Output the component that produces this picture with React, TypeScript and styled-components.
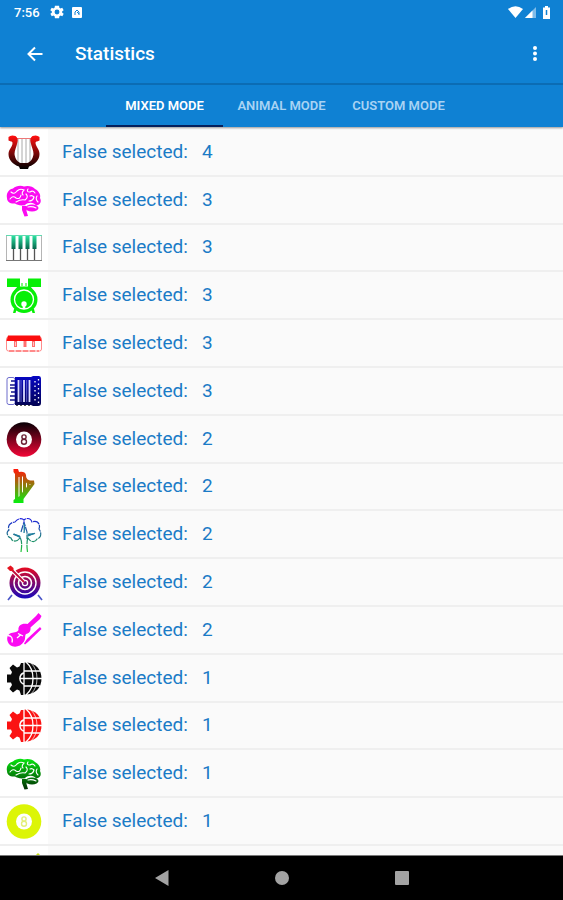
import React from 'react';
import styled, { createGlobalStyle } from 'styled-components';

const GlobalStyle = createGlobalStyle`
  * { box-sizing: border-box; }
  body { margin: 0; background: #fafafa; font-family: Roboto, sans-serif; }
  button { font: inherit; border: 0; padding: 0; background: none; cursor: pointer; }
`;

const Screen = styled.div`
  display: flex;
  flex-direction: column;
  min-height: 100vh;
`;

const Header = styled.header`
  position: sticky;
  top: 0;
  z-index: 1;
  background: #0f81d3;
  color: #fff;
  box-shadow: 0 1px 2px rgba(0, 0, 0, 0.4);
`;

const StatusBar = styled.div`
  display: flex;
  align-items: center;
  height: 24px;
  padding: 0 12px 0 14px;
  font-size: 13px;
  font-weight: 500;
`;

const StatusIcons = styled.div<{ $end?: boolean }>`
  display: flex;
  align-items: center;
  gap: ${(p) => (p.$end ? '2px' : '8px')};
  margin-left: ${(p) => (p.$end ? 'auto' : '10px')};
`;

const Toolbar = styled.div`
  display: flex;
  align-items: center;
  height: 61px;
  padding: 0 16px 0 23px;
  border-bottom: 2px solid #0b6cb4;
`;

const IconButton = styled.button`
  display: flex;
  align-items: center;
  justify-content: center;
  width: 24px;
  height: 24px;
  color: #fff;
`;

const Title = styled.h1`
  flex: 1;
  margin: 0 0 0 28px;
  font-size: 19px;
  line-height: 24px;
  font-weight: 500;
`;

const Tabs = styled.div`
  display: flex;
  justify-content: center;
  height: 42px;
`;

const Tab = styled.button<{ $active: boolean }>`
  width: 117px;
  height: 42px;
  border-bottom: 2px solid ${(p) => (p.$active ? '#04205c' : 'transparent')};
  color: ${(p) => (p.$active ? '#fff' : '#a9d3f3')};
  font-size: 13px;
  font-weight: 600;
  text-transform: uppercase;
  white-space: nowrap;
`;

const List = styled.ul`
  flex: 1;
  display: flex;
  flex-direction: column;
  margin: 0;
  padding: 2px 0 0;
  list-style: none;
`;

const Row = styled.li`
  flex: 1 0 46px;
  display: flex;
  align-items: center;
  border-bottom: 2px solid #efefef;
  background: #fafafa;
  color: #1b7bc6;
  font-size: 19px;
  line-height: 24px;
`;

const PeekRow = styled.li`
  display: flex;
  height: 9px;
  overflow: hidden;
`;

const Picture = styled.div`
  align-self: stretch;
  display: flex;
  align-items: center;
  width: 48px;
  margin-right: 14px;
  background: #fff;
`;

const Label = styled.span`
  margin-right: 14px;
`;

const NavBar = styled.nav`
  position: sticky;
  bottom: 0;
  display: flex;
  justify-content: center;
  align-items: center;
  gap: 96px;
  height: 45px;
  border-top: 1px solid #777;
  background: #000;
`;

type Grad = { id: string; from: string; to: string };

const Art = ({ grad, children }: { grad?: Grad; children: React.ReactNode }) => (
  <svg width="48" height="44" viewBox="0 1 48 44" aria-hidden="true">
    {grad && (
      <defs>
        <linearGradient id={grad.id} gradientUnits="userSpaceOnUse" x1="0" y1="7" x2="0" y2="40">
          <stop offset="0" stopColor={grad.from} />
          <stop offset="1" stopColor={grad.to} />
        </linearGradient>
      </defs>
    )}
    {children}
  </svg>
);

const Lyre = () => (
  <Art grad={{ id: 'lyre', from: '#ff1010', to: '#000' }}>
    <g stroke="#aaa" strokeWidth="1">
      <path d="M18 10V34M22 10V36M26 10V36M30 10V34" />
      <path d="M15 9.500H33" stroke="#e77" />
    </g>
    <path
      fill="url(#lyre)"
      d="M8.500 8Q11 5.500 15.500 7Q18.500 9 17.500 13C16.500 18 14.500 21 14.500 25C15 30 18 33.500 21 34H27C30 33.500 33 30 33.500 25C33.500 21 31.500 18 30.500 13Q29.500 9 32.500 7Q37 5.500 39.500 8V11.500L37 12.500Q35.500 12 35.500 14C36 18 39.500 20 39.500 25C39.500 31 35 35.500 29 37.500L28 40H20L19 37.500C13 35.500 8.500 31 8.500 25C8.500 20 12.500 18 12.500 14Q12.500 12 11 12.500L8.500 11.500Z"
    />
  </Art>
);

const Brain = ({ grad, color }: { grad?: Grad; color: string }) => (
  <Art grad={grad}>
    <g fill={color}>
      <path d="M7 21C6 17 8 12.500 13 11.500C16 8.500 21 8 24 9.500C28 8 33 9.500 35 12C39 14 41 18 40 21C42 25 40 28 36 28.500C34 25 28 25 25 28C21 29 17 28 15 26.500C10 27 7 24.500 7 21Z" />
      <path d="M22 29Q26 28 27 30L26.500 34L28 39L24.500 39.500L22 33Z" />
      <ellipse cx="32" cy="31" rx="6.500" ry="3.500" />
    </g>
    <g fill="none" stroke="#fff" strokeWidth="1.100" strokeLinecap="round">
      <path d="M11 15Q14 18 17 14Q20 11 24 13Q21 16 23 18" />
      <path d="M10 22Q13 18 16 21Q20 23 21 18" />
      <path d="M16 25Q21 22 25 23Q29 20 26 17" />
      <path d="M28 12Q26 15 30 15Q33 13 35 16" />
      <path d="M29 24Q33 24 34 20Q32 18 30 19" />
      <path d="M37 19Q35 22 38 25M28 30Q32 29 36 31" />
    </g>
  </Art>
);

const PianoKeys = () => (
  <Art>
    <defs>
      <linearGradient id="keys" x1="0" y1="0" x2="0" y2="1">
        <stop offset="0" stopColor="#2be0a0" />
        <stop offset="1" stopColor="#06664c" />
      </linearGradient>
    </defs>
    <rect x="6.500" y="11.500" width="35" height="25" fill="#fff" stroke="#b5b5b5" />
    <path d="M6 11.500H42" stroke="#5fdcb0" />
    <path d="M6 36.500H42" stroke="#777" />
    <path d="M13.500 24V36M20.500 24V36M27.500 24V36M34.500 24V36" stroke="#555" strokeWidth="1.300" />
    <g fill="url(#keys)">
      <rect x="11.500" y="12" width="4" height="13" />
      <rect x="18.500" y="12" width="4" height="13" />
      <rect x="25.500" y="12" width="4" height="13" />
      <rect x="32.500" y="12" width="4" height="13" />
    </g>
  </Art>
);

const Drums = () => (
  <Art>
    <g fill="#06ef06">
      <rect x="7" y="6.500" width="13" height="8.500" />
      <rect x="28" y="6.500" width="13" height="8.500" />
      <path d="M17 15H31L34 20H14ZM14 37L17 36L15.500 41H13ZM34 37L31 36L32.500 41H35Z" />
      <circle cx="24" cy="27.500" r="13.500" />
    </g>
    <circle cx="24" cy="27.500" r="9.500" fill="none" stroke="#fff" strokeWidth="1.300" />
    <path d="M21 11H23V14H25V11H27V15H21Z" fill="#7cf87c" />
    <circle cx="24" cy="32" r="2.700" fill="#fff" />
    <path d="M22.700 33H25.300V37H22.700Z" fill="#fff" />
  </Art>
);

const Melodica = () => (
  <Art>
    <rect x="6.500" y="17" width="35" height="14" rx="2" fill="#fff" stroke="#ff8c8c" />
    <path d="M8 15.500H40L41.500 21H6.500Z" fill="#fb0d0d" />
    <path d="M15.500 21V27M25 21V27M33.500 21V27" stroke="#ff7070" strokeWidth="3" />
    <path d="M15.500 22V26M33.500 22V26" stroke="#ffc6c6" strokeWidth="1" />
    <path d="M9 31H39" stroke="#ff5050" strokeDasharray="5 2" />
  </Art>
);

const Accordion = () => (
  <Art grad={{ id: 'accordion', from: '#0808c8', to: '#02024a' }}>
    <rect x="7" y="9.500" width="8" height="27" rx="2" fill="#fff" stroke="#6c6ccc" />
    <path d="M11 13H15M10 17H15M10 20H15M11 24H15M10 28H15M10 32H15" stroke="#14148c" strokeWidth="1.600" />
    <path d="M15 9H31L33 8H39Q41 8 41 10.500V35Q41 38 38 38H33L31 37H15Z" fill="url(#accordion)" />
    <path d="M18.500 12V34M24 12V34M29.500 12V34" stroke="#dcdcff" strokeWidth="1.800" />
    <path d="M21 12V34M26.700 12V34" stroke="#7777d8" strokeWidth="0.800" />
    <path d="M35 13V34M38.500 11V35" stroke="#fff" strokeWidth="1.300" strokeDasharray="1.500 3" />
    <path d="M16 37.500H31" stroke="#555" strokeDasharray="2 2" />
  </Art>
);

const EightBall = ({ grad, color, digit }: { grad?: Grad; color: string; digit: string }) => (
  <Art grad={grad}>
    <circle cx="24" cy="23.500" r="17.300" fill={color} />
    <circle cx="24" cy="23.500" r="8" fill="#fff" />
    <g fill="none" stroke={digit} strokeWidth="1.400">
      <circle cx="24" cy="21" r="2.100" />
      <circle cx="24" cy="25.800" r="2.500" />
    </g>
  </Art>
);

const Harp = () => (
  <Art grad={{ id: 'harp', from: '#ff1a0a', to: '#06f010' }}>
    <path
      fill="url(#harp)"
      fillRule="evenodd"
      d="M13.500 6H18L19 9Q25 8 26 12C26 16 28 18 34 17.500L34.500 21L23.500 36V40H13.500V37L15 36V11L13.500 9ZM18.500 14V34L19.500 33V14ZM22 13V30L23 28.500V14ZM26 19.500V25L27 23.500V20.500ZM29.500 21V22L31 21Z"
    />
  </Art>
);

const Tree = () => (
  <Art grad={{ id: 'tree', from: '#1c1ce0', to: '#22c43a' }}>
    <g fill="none" stroke="url(#tree)" strokeWidth="1.200" strokeDasharray="7 0.800">
      <path d="M20 27C17 31 12 31 11 27C7 26 6 21 9 19C7 15 11 11 15 11C18 7 22 7 24 9C27 6 31 8 32 11C37 9 41 13 39 18C42 22 41 27 37 28C35 32 30 31 28 27" />
      <path d="M21 41C22 34 22 30 20 26L13 23M27.500 41C26.500 34 27 30 28 25L35 22" />
      <path d="M21 21L24 11L27 21V28" />
    </g>
    <path d="M24 12L25 17L24 22ZM14 23L20 25V26.500ZM28 23L35 22.500L28 24.500Z" fill="#217fa0" stroke="#217fa0" strokeWidth="0.800" />
  </Art>
);

const Target = () => (
  <Art grad={{ id: 'target', from: '#f00a18', to: '#1208c0' }}>
    <circle cx="25" cy="24" r="15.500" fill="url(#target)" />
    <g fill="none" stroke="#fff">
      <circle cx="25" cy="24" r="11" strokeWidth="1.400" />
      <circle cx="25" cy="24" r="6.500" strokeWidth="1.600" />
      <circle cx="25" cy="24" r="2.600" strokeWidth="1.300" />
      <path d="M11 10L24 23" strokeWidth="4" />
    </g>
    <path d="M10 9L24 23" stroke="#c00c38" strokeWidth="1.800" />
    <path d="M7 9L10.500 6.500L13.500 9V12H10Z" fill="#e41420" />
    <path d="M12 36L8 41M38 36L42 41" stroke="#4a56c8" strokeWidth="1.700" />
  </Art>
);

const Violin = () => (
  <Art>
    <g fill="#fb0af2">
      <path d="M38.500 6L41.500 9L40 12L30.500 20.500C31 24 29 26.500 26 27C24.500 29 26 31 24 34.500C20.500 40 14 41 10 38C6 34 6.500 28.500 10 26.500C13.500 25 17 26 18.500 23C18 18.500 21.500 16 27.500 17L36 9Z" />
      <path d="M40 20L41.500 22L28 35L25 37.500L24 36.500L27 32Z" />
    </g>
    <path d="M8 28.500Q13.500 29 12 35.500M18 26.500L23 29M17 31L20.500 28" fill="none" stroke="#fff" strokeWidth="1.300" />
  </Art>
);

const GearGlobe = ({ color }: { color: string }) => (
  <Art>
    <path
      fill={color}
      d="M24 8V40H21L19.500 35.500L17 34.500L13 37.500L9.500 34L12 30L11 27.500H7V19.500H11L12 17L9.500 13L13 9.500L17 12.500L19.500 11.500L21 8Z"
    />
    <circle cx="27" cy="23.500" r="7.500" fill="#fff" />
    <path d="M24 7.500C35 7 41.500 14 41.500 23.500S35 40 24 39.500Z" fill={color} />
    <path d="M24 17Q20 18 20 23.500T24 30Z" fill={color} />
    <g fill="none" stroke="#fff" strokeWidth="1.300">
      <path d="M24 7V40M24 16H40M20 23.500H42M24 31H40" />
      <path d="M26 7Q33 13 33 23.500T26 40" />
      <path d="M31 8Q37 14 37 23.500T31 39" strokeWidth="0.700" />
      <path d="M24 18Q20 19 20 23.500T24 29" />
    </g>
  </Art>
);

const rows: { name: string; art: React.ReactNode; count: number }[] = [
  { name: 'lyre', art: <Lyre />, count: 4 },
  { name: 'brain-pink', art: <Brain color="#fb0af2" />, count: 3 },
  { name: 'piano', art: <PianoKeys />, count: 3 },
  { name: 'drums', art: <Drums />, count: 3 },
  { name: 'melodica', art: <Melodica />, count: 3 },
  { name: 'accordion', art: <Accordion />, count: 3 },
  {
    name: 'ball-red',
    art: <EightBall grad={{ id: 'ball', from: '#0c0006', to: '#ee0636' }} color="url(#ball)" digit="#6b2034" />,
    count: 2,
  },
  { name: 'harp', art: <Harp />, count: 2 },
  { name: 'tree', art: <Tree />, count: 2 },
  { name: 'target', art: <Target />, count: 2 },
  { name: 'violin', art: <Violin />, count: 2 },
  { name: 'globe-black', art: <GearGlobe color="#0a0a0a" />, count: 1 },
  { name: 'globe-red', art: <GearGlobe color="#fb1212" />, count: 1 },
  {
    name: 'brain-green',
    art: <Brain grad={{ id: 'brain', from: '#08f010', to: '#022c04' }} color="url(#brain)" />,
    count: 1,
  },
  { name: 'ball-yellow', art: <EightBall color="#dcf506" digit="#e3ef7a" />, count: 1 },
];

const tabs = ['Mixed mode', 'Animal mode', 'Custom mode'];

export default function App() {
  const [active, setActive] = React.useState(0);
  return (
    <Screen>
      <GlobalStyle />
      <Header>
        <StatusBar>
          <span>7:56</span>
          <StatusIcons>
            <svg width="14" height="14" viewBox="2 2 20 20" fill="#fff" aria-hidden="true">
              <path d="M19.400 13a7.500 7.500 0 0 0 0-2l2.100-1.600-2-3.500-2.500 1a7 7 0 0 0-1.700-1L15 3H9l-.4 2.900a7 7 0 0 0-1.700 1l-2.500-1-2 3.500L4.600 11a7.500 7.500 0 0 0 0 2l-2.100 1.600 2 3.500 2.500-1a7 7 0 0 0 1.700 1L9 21h6l.4-2.900a7 7 0 0 0 1.700-1l2.500 1 2-3.500ZM12 15.500a3.500 3.500 0 1 1 0-7 3.500 3.500 0 0 1 0 7Z" />
            </svg>
            <svg width="10" height="11" viewBox="0 0 10 11" aria-hidden="true">
              <rect width="10" height="11" rx="1" fill="#fff" />
              <path d="M3 8V5L5 3L7 5V8M5 5L7 7" fill="none" stroke="#0f81d3" />
            </svg>
          </StatusIcons>
          <StatusIcons $end>
            <svg width="15" height="12" viewBox="0 0 15 12" aria-hidden="true">
              <path d="M0 3Q7.500-2.500 15 3L7.500 12Z" fill="#fff" />
            </svg>
            <svg width="12" height="12" viewBox="0 0 12 12" aria-hidden="true">
              <path d="M11 1V12H0Z" fill="#7fbce9" />
              <path d="M7.500 4.500V12H0Z" fill="#fff" />
            </svg>
            <svg width="12" height="13" viewBox="0 0 12 13" aria-hidden="true">
              <path d="M6 0H9V1.500H11V13H4V1.500H6Z" fill="#fff" />
              <path d="M7.500 4V9" stroke="#0f81d3" strokeWidth="1.500" />
            </svg>
          </StatusIcons>
        </StatusBar>
        <Toolbar>
          <IconButton aria-label="Back">
            <svg width="16" height="16" viewBox="0 0 16 16" fill="none" stroke="currentColor" strokeWidth="2">
              <path d="M15.500 8H2M8 1.500L1.500 8L8 14.500" />
            </svg>
          </IconButton>
          <Title>Statistics</Title>
          <IconButton aria-label="More options">
            <svg width="6" height="18" viewBox="0 0 6 18" fill="currentColor">
              <circle cx="3" cy="3" r="2" />
              <circle cx="3" cy="8.500" r="2" />
              <circle cx="3" cy="14" r="2" />
            </svg>
          </IconButton>
        </Toolbar>
        <Tabs role="tablist">
          {tabs.map((t, i) => (
            <Tab key={t} role="tab" aria-selected={i === active} $active={i === active} onClick={() => setActive(i)}>
              {t}
            </Tab>
          ))}
        </Tabs>
      </Header>
      <List>
        {rows.map((r) => (
          <Row key={r.name}>
            <Picture>{r.art}</Picture>
            <Label>False selected:</Label>
            <span>{r.count}</span>
          </Row>
        ))}
        <PeekRow>
          <Picture>
            <svg width="48" height="9" viewBox="0 0 48 9" aria-hidden="true">
              <path d="M36 9L38 7L40 9Z" fill="#c4e010" />
            </svg>
          </Picture>
        </PeekRow>
      </List>
      <NavBar>
        <IconButton aria-label="Back">
          <svg width="24" height="24" viewBox="0 0 24 24">
            <path d="M5 12L18.500 4V20Z" fill="#a3a3a3" />
          </svg>
        </IconButton>
        <IconButton aria-label="Home">
          <svg width="24" height="24" viewBox="0 0 24 24">
            <circle cx="12" cy="12" r="7" fill="#a3a3a3" />
          </svg>
        </IconButton>
        <IconButton aria-label="Overview">
          <svg width="24" height="24" viewBox="0 0 24 24">
            <rect x="5" y="5" width="14" height="14" rx="1" fill="#a3a3a3" />
          </svg>
        </IconButton>
      </NavBar>
    </Screen>
  );
}
